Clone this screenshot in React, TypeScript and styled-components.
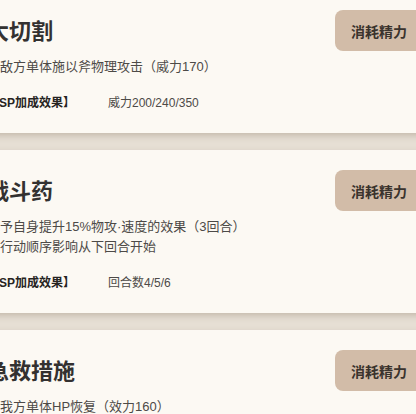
import styled, { createGlobalStyle } from "styled-components";

const GlobalStyle = createGlobalStyle`
  html, body {
    margin: 0;
    padding: 0;
    background: #e6dfd4;
    overflow: hidden;
  }
  body {
    font-family: "Liberation Sans", "Noto Sans CJK SC", sans-serif;
  }
`;

const SkillList = styled.div`
  display: flex;
  flex-direction: column;
  gap: 17px;
  width: 471px;
  margin: -10px 0 0 -36px;
`;

const Card = styled.div`
  display: flex;
  justify-content: space-between;
  align-items: flex-start;
  padding: 20px 12px 20px 23px;
  background: #fcf9f3;
  box-shadow: 0 3px 6px rgba(90, 70, 45, 0.22);
`;

const Info = styled.div`
  display: flex;
  flex-direction: column;
`;

const Title = styled.h2`
  margin: 7px 0 0;
  font-size: 22px;
  line-height: 30px;
  font-weight: 700;
  color: #333130;
`;

const Description = styled.p`
  margin: 10px 0 0;
  font-size: 13px;
  line-height: 20px;
  color: #4d4a47;
`;

const Bonus = styled.div`
  display: flex;
  margin-top: 16px;
  font-size: 12px;
  line-height: 20px;
  color: #4d4a47;
`;

const BonusLabel = styled.span`
  width: 121px;
  font-weight: 700;
  color: #262422;
`;

const CostButton = styled.button`
  flex: none;
  height: 41px;
  padding: 0 16px;
  border: none;
  border-radius: 8px;
  background: #d2bca8;
  color: #3a332d;
  font-family: inherit;
  font-size: 14px;
  font-weight: 700;
  cursor: pointer;
`;

type Skill = {
  name: string;
  lines: string[];
  bonus: string;
};

const skills: Skill[] = [
  {
    name: "大切割",
    lines: ["对敌方单体施以斧物理攻击（威力170）"],
    bonus: "威力200/240/350",
  },
  {
    name: "战斗药",
    lines: ["给予自身提升15%物攻·速度的效果（3回合）", "※行动顺序影响从下回合开始"],
    bonus: "回合数4/5/6",
  },
  {
    name: "急救措施",
    lines: ["对我方单体HP恢复（效力160）"],
    bonus: "效力190/220/300",
  },
];

export default function App() {
  return (
    <>
      <GlobalStyle />
      <SkillList>
        {skills.map((s) => (
          <Card key={s.name}>
            <Info>
              <Title>{s.name}</Title>
              <Description>
                {s.lines.map((l, i) => (
                  <span key={i}>
                    {l}
                    {i < s.lines.length - 1 && <br />}
                  </span>
                ))}
              </Description>
              <Bonus>
                <BonusLabel>【SP加成效果】</BonusLabel>
                <span>{s.bonus}</span>
              </Bonus>
            </Info>
            <CostButton>消耗精力</CostButton>
          </Card>
        ))}
      </SkillList>
    </>
  );
}
